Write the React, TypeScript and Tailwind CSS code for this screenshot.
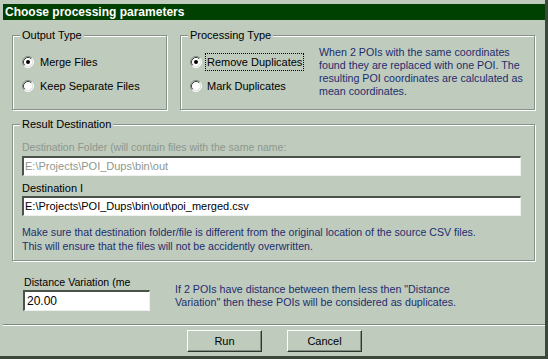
import React from 'react';

const font = "font-['Liberation_Sans',Arial,sans-serif]";

const Radio: React.FC<{ checked?: boolean }> = ({ checked }) => (
  <svg width="12" height="12" viewBox="0 0 12 12" className="shrink-0">
    <circle cx="6" cy="6" r="5" fill="#fff" />
    <path d="M2.11 9.89 A5.5 5.5 0 0 1 9.89 2.11" stroke="#7f897f" fill="none" />
    <path d="M9.89 2.11 A5.5 5.5 0 0 1 2.11 9.89" stroke="#fff" fill="none" />
    <path d="M2.82 9.18 A4.5 4.5 0 0 1 9.18 2.82" stroke="#3e463e" fill="none" />
    <path d="M9.18 2.82 A4.5 4.5 0 0 1 2.82 9.18" stroke="#d9e0d8" fill="none" />
    {checked && <circle cx="6" cy="6" r="2" fill="#000" />}
  </svg>
);

const GroupBox: React.FC<{ title: string; className?: string; children?: React.ReactNode }> = ({
  title,
  className = '',
  children,
}) => (
  <div
    className={`relative border border-[#86928a] shadow-[inset_1px_1px_0_#fff,1px_1px_0_#fff] ${className}`}
  >
    <span className="absolute left-[7px] top-[-7px] px-[2px] bg-[#bfcbbd] whitespace-nowrap">{title}</span>
    {children}
  </div>
);

const Field: React.FC<{ value: string; disabled?: boolean; className?: string }> = ({
  value,
  disabled,
  className = '',
}) => (
  <div
    className={`flex items-center bg-white border-t-2 border-l-2 border-b border-r border-t-[#4a524a] border-l-[#4a524a] border-b-[#eef2ee] border-r-[#eef2ee] whitespace-nowrap overflow-hidden ${
      disabled ? 'text-[#8d978d]' : 'text-black'
    } ${className}`}
  >
    {value}
  </div>
);

const Button: React.FC<{ label: string }> = ({ label }) => (
  <div className="w-[75px] h-[22px] flex items-center justify-center border border-t-white border-l-white border-b-[#2f372f] border-r-[#2f372f] shadow-[inset_-1px_-1px_0_#838e83]">
    {label}
  </div>
);

export default function App() {
  return (
    <div
      className={`w-[548px] h-[359px] bg-[#bfcbbd] border-r-[3px] border-b-[3px] border-[#3c473c] pl-[3px] pt-[4px] ${font} text-[11px] leading-[13px] text-black overflow-hidden`}
    >
      <div className="h-[16px] bg-[#004000] text-white font-bold text-[12px] leading-[16px] pl-[2px]">
        Choose processing parameters
      </div>

      <div className="flex mt-[15px] ml-[9px]">
        <GroupBox title="Output Type" className="w-[155px] h-[75px]">
          <div className="flex flex-col gap-[6px] pt-[17px] pl-[9px]">
            <div className="h-[18px] flex items-center">
              <Radio checked />
              <span className="ml-[4px] px-[1px] border border-transparent">Merge Files</span>
            </div>
            <div className="h-[18px] flex items-center">
              <Radio />
              <span className="ml-[4px] px-[1px] border border-transparent">Keep Separate Files</span>
            </div>
          </div>
        </GroupBox>

        <GroupBox title="Processing Type" className="w-[355px] h-[75px] ml-[13px]">
          <div className="flex">
            <div className="w-[138px] shrink-0 flex flex-col gap-[6px] pt-[17px] pl-[9px]">
              <div className="h-[18px] flex items-center">
                <Radio checked />
                <span className="ml-[3px] px-[1px] leading-[16px] border border-dotted border-black">
                  Remove Duplicates
                </span>
              </div>
              <div className="h-[18px] flex items-center">
                <Radio />
                <span className="ml-[3px] px-[1px] border border-transparent">Mark Duplicates</span>
              </div>
            </div>
            <div className="pt-[10px] text-[10.7px] text-[#1e2d6e] whitespace-nowrap">
              <div>When 2 POIs with the same coordinates</div>
              <div>found they are replaced with one POI. The</div>
              <div>resulting POI coordinates are calculated as</div>
              <div>mean coordinates.</div>
            </div>
          </div>
        </GroupBox>
      </div>

      <GroupBox title="Result Destination" className="w-[523px] h-[137px] mt-[14px] ml-[9px]">
        <div className="pl-[9px] pt-[16px]">
          <div className="text-[10.5px] text-[#8d978d] whitespace-nowrap">
            Destination Folder (will contain files with the same name:
          </div>
          <Field disabled value="E:\Projects\POI_Dups\bin\out" className="w-[499px] h-[20px] mt-[2px] pl-[1px]" />
          <div className="mt-[6px]">Destination I</div>
          <Field value="E:\Projects\POI_Dups\bin\out\poi_merged.csv" className="w-[499px] h-[20px] mt-[1px] pl-[1px]" />
          <div className="mt-[9px] text-[10.6px] leading-[14px] text-[#1e2d6e] whitespace-nowrap">
            <div>Make sure that destination folder/file is different from the original location of the source CSV files.</div>
            <div>This will ensure that the files will not be accidently overwritten.</div>
          </div>
        </div>
      </GroupBox>

      <div className="flex mt-[15px] ml-[20px]">
        <div className="w-[127px] shrink-0">
          <div className="pl-[1px] text-[10.6px] whitespace-nowrap">Distance Variation (me</div>
          <Field value="20.00" className="w-[127px] h-[21px] mt-[1px] pl-[2px] text-[12px]" />
        </div>
        <div className="ml-[25px] pt-[7px] text-[10.7px] leading-[13px] text-[#1e2d6e] whitespace-nowrap">
          <div>If 2 POIs have distance between them less then "Distance</div>
          <div>Variation" then these POIs will be considered as duplicates.</div>
        </div>
      </div>

      <div className="mt-[13px] h-[2px] border-t border-b border-t-[#7f8a7f] border-b-white" />

      <div className="flex gap-[25px] mt-[4px] ml-[184px]">
        <Button label="Run" />
        <Button label="Cancel" />
      </div>
    </div>
  );
}
